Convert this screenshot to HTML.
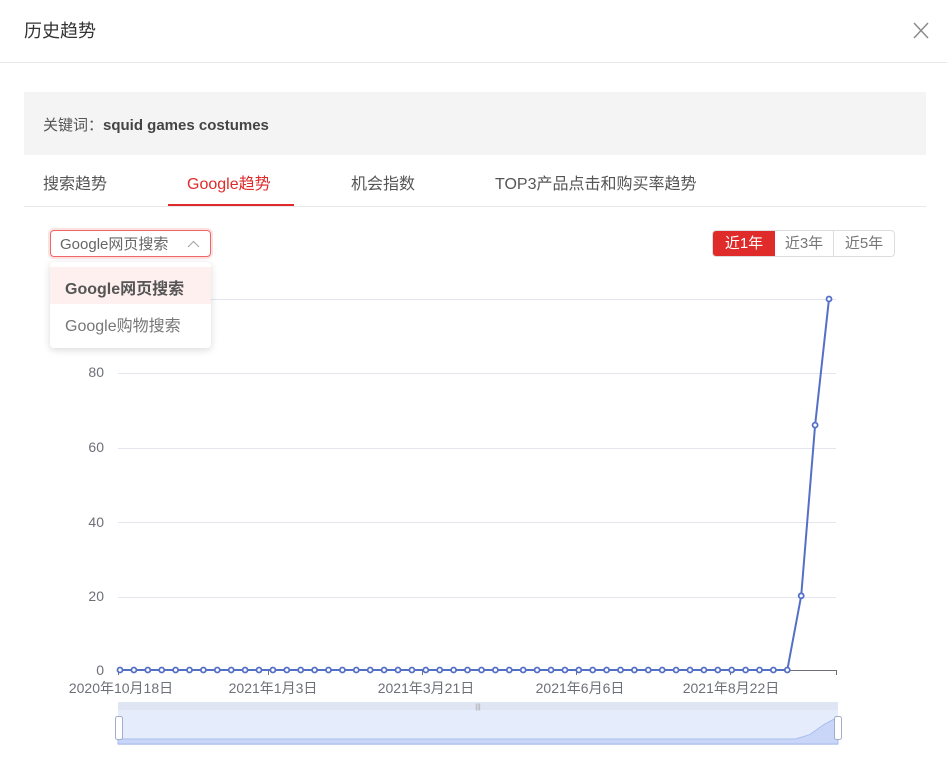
<!DOCTYPE html>
<html><head><meta charset="utf-8"><style>
*{margin:0;padding:0;box-sizing:border-box}
body{width:947px;height:775px;background:#fff;font-family:"Liberation Sans","Noto Sans CJK SC",sans-serif;color:#333;position:relative;overflow:hidden}
.abs{position:absolute}
</style></head><body>
<div class="abs" style="left:24px;top:17px;font-size:18px;color:#333">历史趋势</div>
<svg class="abs" style="left:913px;top:22px" width="16" height="17"><path d="M1 1L15 16M15 1L1 16" stroke="#888" stroke-width="1.4"/></svg>
<div class="abs" style="left:0;top:62px;width:947px;height:1px;background:#e8e8e8"></div>
<div class="abs" style="left:24px;top:92px;width:902px;height:63px;background:#f4f4f4"></div>
<div class="abs" style="left:43px;top:114px;font-size:15px;color:#555">关键词：<b style="color:#444">squid games costumes</b></div>
<div class="abs" style="left:43px;top:170px;font-size:16px;color:#555">搜索趋势</div>
<div class="abs" style="left:187px;top:170px;font-size:16px;color:#e02b2b">Google趋势</div>
<div class="abs" style="left:168px;top:204px;width:126px;height:2px;background:#e02b2b"></div>
<div class="abs" style="left:351px;top:170px;font-size:16px;color:#555">机会指数</div>
<div class="abs" style="left:495px;top:170px;font-size:16px;color:#555">TOP3产品点击和购买率趋势</div>
<div class="abs" style="left:24px;top:206px;width:902px;height:1px;background:#e8e8e8"></div>

<svg class="abs" style="left:0;top:0" width="947" height="775">
<g stroke="#e3e6ef" stroke-width="1">
<line x1="118" x2="836" y1="299.5" y2="299.5"/><line x1="118" x2="836" y1="373.5" y2="373.5"/>
<line x1="118" x2="836" y1="448.5" y2="448.5"/><line x1="118" x2="836" y1="522.5" y2="522.5"/>
<line x1="118" x2="836" y1="597.5" y2="597.5"/></g>
<g stroke="#6e7079"><line x1="118" x2="837" y1="670.5" y2="670.5"/>
<line x1="118.5" x2="118.5" y1="670" y2="675"/><line x1="268.5" x2="268.5" y1="670" y2="675"/>
<line x1="422.5" x2="422.5" y1="670" y2="675"/><line x1="576.5" x2="576.5" y1="670" y2="675"/>
<line x1="730.5" x2="730.5" y1="670" y2="675"/><line x1="836.5" x2="836.5" y1="670" y2="675"/></g>
<g fill="#6e7079" font-size="14" font-family="Liberation Sans,Noto Sans CJK SC,sans-serif" text-anchor="end">
<text x="104" y="377">80</text><text x="104" y="452">60</text><text x="104" y="527">40</text>
<text x="104" y="601">20</text><text x="104" y="675">0</text></g>
<g fill="#6e7079" font-size="14" font-family="Liberation Sans,Noto Sans CJK SC,sans-serif" text-anchor="middle">
<text x="121" y="693">2020年10月18日</text><text x="273" y="693">2021年1月3日</text>
<text x="426" y="693">2021年3月21日</text><text x="580" y="693">2021年6月6日</text><text x="731" y="693">2021年8月22日</text></g>
<rect x="118" y="702" width="720" height="8" fill="#dfe5f2"/>
<rect x="118" y="710" width="720" height="35" fill="#e5edfd"/>
<path id="area" fill="#c9d6f7" stroke="#a8bcf0" stroke-width="1"/>
<line x1="118" x2="838" y1="744.5" y2="744.5" stroke="#c2cff0"/>
<rect x="115.5" y="716.5" width="7" height="23" rx="2" fill="#fff" stroke="#a0acc8"/>
<rect x="834.5" y="716.5" width="7" height="23" rx="2" fill="#fff" stroke="#a0acc8"/>
<text x="478" y="709" font-size="7" fill="#999" text-anchor="middle">|||</text>
<polyline id="ln" fill="none" stroke="#5470c6" stroke-width="2"/>
<g id="pts"></g>
</svg>
<script>
var n=52,x0=120,dx=(829-120)/51,vals=[];for(var i=0;i<n;i++)vals.push(0);vals[49]=20;vals[50]=66;vals[51]=100;
var pts=[],g='',ar='M118 744';
for(var i=0;i<n;i++){var x=x0+i*dx,y=670-vals[i]*3.71;pts.push(x.toFixed(1)+','+y.toFixed(1));
g+='<circle cx="'+x.toFixed(1)+'" cy="'+y.toFixed(1)+'" r="2.5" fill="#fff" stroke="#5470c6" stroke-width="1.8"/>';
ar+=' L'+(118+i*(720/51)).toFixed(1)+' '+(739-vals[i]*0.22).toFixed(1);}
ar+=' L838 744 Z';
document.getElementById('ln').setAttribute('points',pts.join(' '));
document.getElementById('pts').innerHTML=g;
document.getElementById('area').setAttribute('d',ar);
</script>

<div class="abs" style="left:50px;top:230px;width:161px;height:27px;border:1px solid #e66;border-radius:4px;box-shadow:0 0 0 2px #fde2e2;font-size:15px;color:#666;padding:2px 0 0 9px">Google网页搜索
<svg style="position:absolute;left:136px;top:9px" width="13" height="8"><path d="M1 7L6.5 1.5L12 7" fill="none" stroke="#aaa" stroke-width="1.2"/></svg></div>
<div class="abs" style="left:50px;top:262px;width:161px;height:86px;background:#fff;border-radius:4px;box-shadow:0 2px 8px rgba(0,0,0,.15)">
<div style="margin-top:5px;height:37px;background:#fff0f0;font-size:16px;font-weight:bold;color:#555;padding:8px 0 0 15px">Google网页搜索</div>
<div style="height:38px;font-size:16px;color:#777;padding:8px 0 0 15px">Google购物搜索</div></div>

<div class="abs" style="left:712px;top:230px;width:183px;height:27px;border:1px solid #ddd;border-radius:4px;overflow:hidden;display:flex;font-size:15px;color:#777">
<div style="width:62px;background:#e02b2b;color:#fff;text-align:center;line-height:25px">近1年</div>
<div style="width:59px;border-right:1px solid #ddd;text-align:center;line-height:25px">近3年</div>
<div style="flex:1;text-align:center;line-height:25px">近5年</div></div>
</body></html>
